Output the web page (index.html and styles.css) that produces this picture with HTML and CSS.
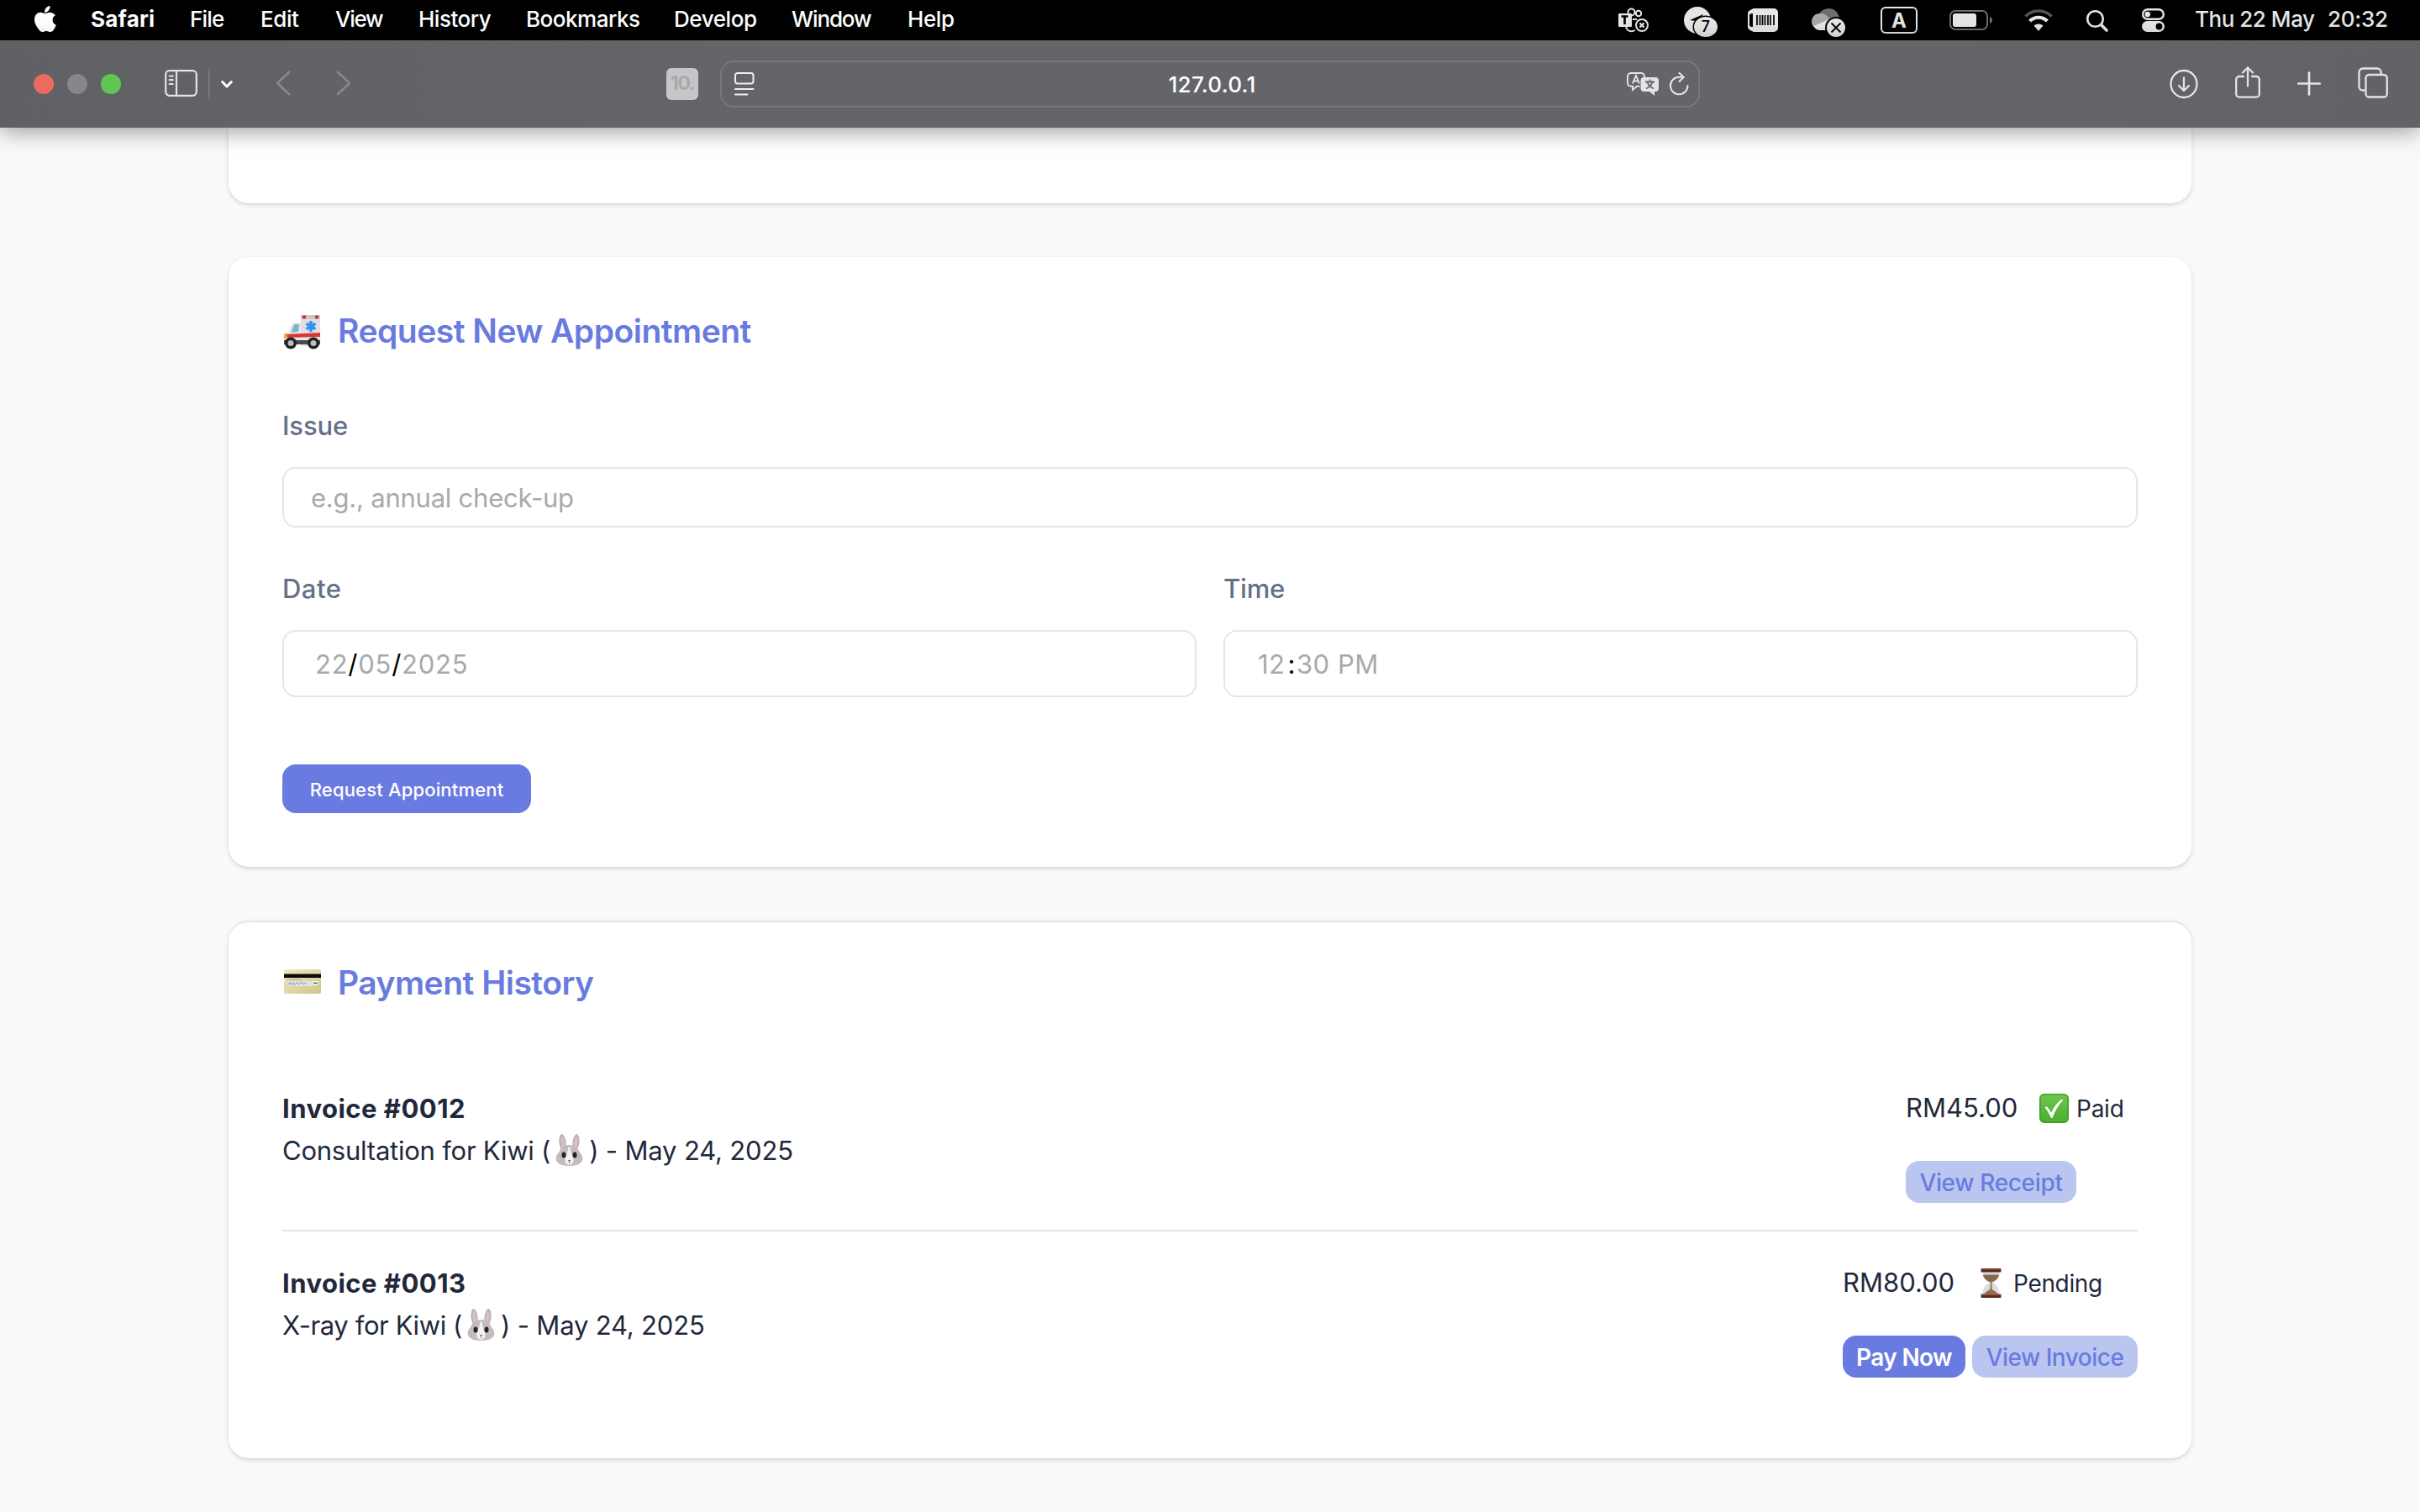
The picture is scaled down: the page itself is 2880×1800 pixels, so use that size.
FILE: index.html
```html
<!DOCTYPE html>
<html lang="en">
<head>
<meta charset="utf-8">
<title>Pet Clinic Dashboard</title>
<link rel="stylesheet" href="styles.css">
</head>
<body>
<header class="menubar">
  <svg class="apple" width="28" height="48" viewBox="0 0 28 48" fill="#fff"><path d="M19.6 7c.3 2.100-.6 4.100-1.800 5.500-1.200 1.500-3 2.500-4.700 2.400-.3-2 .6-4.100 1.700-5.400C16 8.100 18 7.100 19.600 7zM25.800 18.200c-2 1.200-3.200 3.100-3.200 5.600 0 2.900 1.700 5.100 4.200 6-.6 1.800-1.500 3.500-2.600 5.100-1.200 1.800-2.400 3.100-4.300 3.100-1.900 0-2.500-1.100-4.800-1.100s-3 1.100-4.800 1.100-3.100-1.500-4.400-3.300C3.300 31.600 1 27.500 1 23.600c0-5.500 3.500-8.800 7.300-8.800 2.100 0 3.800 1.300 5.200 1.300 1.300 0 3.300-1.400 5.800-1.400 2.500 0 4.900 1.200 6.500 3.500z"/></svg>
  <nav class="menus">
    <span class="m-app">Safari</span><span class="m-file">File</span><span class="m-edit">Edit</span><span class="m-view">View</span><span class="m-history">History</span><span class="m-book">Bookmarks</span><span class="m-dev">Develop</span><span class="m-window">Window</span><span class="m-help">Help</span>
  </nav>
  <div class="status">
    <svg class="s-teams" width="36" height="48" viewBox="0 0 36 48"><g fill="none" stroke="#e6e6e6" stroke-width="2"><circle cx="15.500" cy="14.500" r="4"/><circle cx="24" cy="16" r="3.200"/><path d="M9 31c.5 4 3 6.200 6.500 6.200 1.800 0 3-.4 4.200-1.200M17 23h5"/><circle cx="28" cy="30" r="7"/></g><rect y="16" width="16" height="16" rx="1" fill="#e6e6e6"/><path d="M3.500 19.500h8M7.500 19.500V29" stroke="#000" stroke-width="2.600"/><path d="M25.500 27.500l5 5m0-5l-5 5" stroke="#e6e6e6" stroke-width="2.400"/></svg>
    <svg class="s-send" width="40" height="48" viewBox="0 0 40 48"><circle cx="16" cy="24" r="16" fill="#e6e6e6"/><path d="M7 24l16-7-5 9-3 8-1-9z" fill="#000"/><ellipse cx="26" cy="32" rx="15.500" ry="13.500" fill="#000"/><ellipse cx="26" cy="32" rx="14" ry="12" fill="#e6e6e6"/><text x="26" y="38" text-anchor="middle" class="seven">7</text></svg>
    <svg class="s-bar" width="36" height="48" viewBox="0 0 36 48"><path d="M7 10h24a5 5 0 0 1 5 5v18a5 5 0 0 1-5 5H7l-5-2.500a4 4 0 0 1-2-3.500V16a4 4 0 0 1 2-3.500z" fill="#e6e6e6"/><path d="M2 18q0-2 4-2v16q-4 0-4-2z" fill="#000"/><path d="M11 18v12M14.500 18v12M17.500 18v12M20.500 18v12M24 18v12M27 18v12M31 18v12" stroke="#000" stroke-width="1.700"/></svg>
    <svg class="s-cloud" width="40" height="48" viewBox="0 0 40 48"><path d="M9 16C12 12 16 10 20 10c7 0 11 4 13 11l-10 3z" fill="#6e6e6e"/><path d="M0 26c0-6 4-10 10-10 6 0 9 3 12 7L3 32C1 31 0 28 0 26z" fill="#a8a8a8"/><path d="M2 31l19-8 10 5v8H11c-5 0-7-2-9-5z" fill="#e6e6e6"/><circle cx="29" cy="33" r="13" fill="#000"/><circle cx="29" cy="33" r="11" fill="#e6e6e6"/><path d="M23.500 27.500l11 11m0-11l-11 11" stroke="#000" stroke-width="1.800"/></svg>
    <span class="s-input">A</span>
    <svg class="s-batt" width="51" height="48" viewBox="0 0 51 48"><rect x="1" y="13" width="44" height="22" rx="6" fill="none" stroke="#6c6c6c" stroke-width="2"/><rect x="4" y="16" width="28" height="16" rx="3" fill="#e6e6e6"/><path d="M48 20c4 1 4 7 0 8z" fill="#6c6c6c"/></svg>
    <svg class="s-wifi" width="34" height="48" viewBox="0 0 34 48" fill="none"><path d="M1.500 19.500c8.500-8.700 22.500-8.700 31 0" stroke="#555" stroke-width="3.600"/><path d="M6.500 25c6-5.800 15-5.800 21 0" stroke="#e6e6e6" stroke-width="4"/><path d="M11.500 30.500c3-2.800 8-2.800 11 0L17 37z" fill="#e6e6e6"/></svg>
    <svg class="s-search" width="26" height="48" viewBox="0 0 26 48" fill="none" stroke="#e6e6e6"><circle cx="10.500" cy="22.500" r="9.300" stroke-width="2.600"/><path d="M17.500 29.500l6.500 6.500" stroke-width="3.600" stroke-linecap="round"/></svg>
    <svg class="s-cc" width="27" height="48" viewBox="0 0 27 48"><rect x="1.200" y="11.200" width="24.600" height="11.600" rx="5.800" fill="none" stroke="#e6e6e6" stroke-width="2.400"/><circle cx="6.800" cy="17" r="3.200" fill="#e6e6e6"/><rect y="25" width="27" height="13" rx="6.500" fill="#e6e6e6"/><circle cx="20.500" cy="31.500" r="3.900" fill="#000"/></svg>
    <span class="s-date">Thu 22 May</span><span class="s-time">20:32</span>
  </div>
</header>

<div class="toolbar">
  <div class="tools-left">
    <i class="light red"></i><i class="light gray"></i><i class="light green"></i>
    <svg class="t-side" width="39" height="36" viewBox="0 0 39 36" fill="none" stroke="#e3e3e8" stroke-width="2.200" stroke-linecap="round"><rect x="1.200" y="3.200" width="36.600" height="29.600" rx="4.500"/><path d="M14 3.500v29M5.700 9.500h4M5.700 14.200h4M5.700 19h4"/></svg>
    <i class="t-sep"></i>
    <svg class="t-chev" width="14" height="36" viewBox="0 0 14 36" fill="none" stroke="#fff" stroke-width="3" stroke-linecap="round" stroke-linejoin="round"><path d="M1.700 15.500L7 21l5.300-5.500"/></svg>
    <svg class="t-back" width="18" height="36" viewBox="0 0 18 36" fill="none" stroke="#87888c" stroke-width="2.600" stroke-linecap="round" stroke-linejoin="round"><path d="M16 4L2 17l14 13"/></svg>
    <svg class="t-fwd" width="18" height="36" viewBox="0 0 18 36" fill="none" stroke="#87888c" stroke-width="2.600" stroke-linecap="round" stroke-linejoin="round"><path d="M2 4l14 13L2 30"/></svg>
  </div>
  <span class="favicon">10.</span>
  <div class="urlbar">
    <svg width="24" height="28" viewBox="0 0 24 28" fill="none" stroke="#eeeef0" stroke-width="2" stroke-linecap="round"><rect x="1" y="1" width="21.500" height="12.500" rx="3"/><path d="M1 20h21.500M1 26.500h14.500"/></svg>
    <span class="url">127.0.0.1</span>
    <div class="url-tools">
      <svg width="38" height="28" viewBox="0 0 38 28"><path d="M5 1h12a4 4 0 0 1 4 4v2.500M15.500 16.800H12L7 21v-4.200H5a4 4 0 0 1-4-4V5a4 4 0 0 1 4-4" fill="none" stroke="#e3e3e8" stroke-width="1.900"/><path d="M7 13.500L11 4l4 9.500M8.500 10.500h5" fill="none" stroke="#e3e3e8" stroke-width="1.900"/><path d="M20.500 6H34a4 4 0 0 1 4 4v9a4 4 0 0 1-4 4h-1v5l-6-5h-6.500a4 4 0 0 1-4-4v-9a4 4 0 0 1 4-4z" fill="#e3e3e8"/><path d="M22 11.500h11M27.500 8.500v3M24.500 12c1.500 4 4 6 7.500 7.500M30.500 12c-1.500 4-4 6-7.500 7.500" fill="none" stroke="#636468" stroke-width="1.800"/></svg>
      <svg width="23" height="28" viewBox="0 0 23 28" fill="none" stroke="#e3e3e8" stroke-width="2.100" stroke-linecap="round" stroke-linejoin="round"><path d="M21.500 16a10.300 10.300 0 1 1-10.300-10.300h4.500M11.500 1l5.200 4.800-5.200 5.200"/></svg>
    </div>
  </div>
  <div class="tools-right">
    <svg width="34" height="40" viewBox="0 0 34 40" fill="none" stroke="#e3e3e8" stroke-width="2.300" stroke-linecap="round" stroke-linejoin="round"><ellipse cx="17" cy="21" rx="15.500" ry="16"/><path d="M17 13.500v15M11 23l6 6 6-6"/></svg>
    <svg width="30" height="40" viewBox="0 0 30 40" fill="none" stroke="#e3e3e8" stroke-width="2.300" stroke-linecap="round" stroke-linejoin="round"><path d="M10 12H5a3.800 3.800 0 0 0-3.800 3.800v17A3.800 3.800 0 0 0 5 36.600h20a3.800 3.800 0 0 0 3.800-3.800v-17A3.800 3.800 0 0 0 25 12h-5M15 23.500V1.500M9 7.500l6-6 6 6"/></svg>
    <svg width="28" height="40" viewBox="0 0 28 40" stroke="#e3e3e8" stroke-width="2.700" stroke-linecap="round"><path d="M14 7.500v26M1.300 20.500h25.400"/></svg>
    <svg width="36" height="40" viewBox="0 0 36 40" fill="none" stroke="#e3e3e8" stroke-width="2.300"><path d="M8 28.500H6a4.500 4.500 0 0 1-4.500-4.500V7A4.500 4.500 0 0 1 6 2.500h17A4.500 4.500 0 0 1 27.500 7v2"/><rect x="9.500" y="10" width="25.300" height="26.500" rx="4"/></svg>
  </div>
</div>

<main class="page">
  <section class="card card-cut"></section>

  <section class="card card-form">
    <h2 class="title"><svg class="emoji-title" width="46" height="42" viewBox="0 0 46 42"><rect x="21" y="1" width="23" height="37" rx="1.500" fill="#e2dfe3"/><path d="M21 10h-7c-2 0-3 1-4 3L6 22c-3 1-5 3-5 6v7h43V22H21z" fill="#e9e6ea"/><path d="M19 12h-4c-1.500 0-2.500 1-3 2.500L9.500 22l8.500-1z" fill="#7fb3c9"/><path d="M2 24l42-2v5L1 28z" fill="#d8372e"/><path d="M1 31h43v5H1z" fill="#4b4b4f"/><path d="M1 24l3-2 1 6-4 1z" fill="#f3a73b"/><rect x="21" y="1" width="23" height="5" rx="1" fill="#cfc5c7"/><circle cx="25" cy="3.500" r="2.300" fill="#b8403a"/><circle cx="40" cy="3.500" r="2.300" fill="#b8403a"/><path d="M33 8v13M27.500 11.200l11 6.600M38.500 11.200l-11 6.600" stroke="#338ff0" stroke-width="3.400"/><circle cx="9" cy="34.500" r="7" fill="#202022"/><circle cx="9" cy="34.500" r="3.500" fill="#bdbdc1"/><circle cx="36" cy="34.500" r="7" fill="#202022"/><circle cx="36" cy="34.500" r="3.500" fill="#bdbdc1"/></svg><span class="t-request">Request New Appointment</span></h2>
    <label class="label l-issue" for="issue">Issue</label>
    <input class="field f-text" id="issue" type="text" placeholder="e.g., annual check-up">
    <div class="pair">
      <div class="col">
        <span class="label l-date">Date</span>
        <div class="field f-picker f-date"><span class="part">22</span><span class="sep">/</span><span class="part">05</span><span class="sep">/</span><span class="part">2025</span></div>
      </div>
      <div class="col">
        <span class="label l-time">Time</span>
        <div class="field f-picker f-time"><span class="part">12</span><span class="sep colon">:</span><span class="part">30 PM</span></div>
      </div>
    </div>
    <button class="btn-request">Request Appointment</button>
  </section>

  <section class="card card-pay">
    <h2 class="title"><svg class="emoji-title" width="46" height="42" viewBox="0 0 46 42"><defs><linearGradient id="cg" x2="1" y2="1"><stop stop-color="#efe9bd"/><stop offset="1" stop-color="#cfc48d"/></linearGradient></defs><g transform="translate(0 -3)"><rect x="1" y="7" width="44" height="29" rx="2" fill="url(#cg)"/><path d="M1 12.500h44v4.500H1z" fill="#0b0b0b"/><path d="M4 21h31v6H4z" fill="#dfe3e0"/><path d="M5 25.500l3-3 1 3 3-3 1 3 4-3 2 2.500 3-3 2 2.500 4-1.500" fill="none" stroke="#7f93c9" stroke-width="1"/><rect x="35" y="21" width="7" height="4.500" fill="#f6f6f2"/><path d="M36 23.300h5" stroke="#555" stroke-width="1.300"/><path d="M4 19h18" stroke="#a9a27a" stroke-width=".8"/></g></svg><span class="t-payment">Payment History</span></h2>

    <div class="invoice">
      <div class="desc">
        <strong>Invoice #0012</strong>
        <p><span class="d-consult">Consultation for Kiwi (</span><svg class="rabbit" width="33" height="38" viewBox="0 0 33 38"><ellipse cx="8.500" cy="10" rx="4" ry="10" transform="rotate(-6 8.500 10)" fill="#bdb2b6"/><ellipse cx="24.500" cy="10" rx="4" ry="10" transform="rotate(6 24.500 10)" fill="#bdb2b6"/><ellipse cx="8.800" cy="11" rx="2" ry="8" transform="rotate(-6 8.800 11)" fill="#dcbfc5"/><ellipse cx="24.200" cy="11" rx="2" ry="8" transform="rotate(6 24.200 11)" fill="#dcbfc5"/><path d="M16.500 13C24 13 27 17 29 22c3 3 4.500 7 2.500 10.500C29 37 22 38 16.500 38S4 37 1.500 32.500C-.5 29 1 25 4 22c2-5 5-9 12.500-9z" fill="#c4bbbf"/><path d="M16.500 15c2 0 1.500 8 4 12 3 4 0 10-4 10s-7-6-4-10c2.500-4 2-12 4-12z" fill="#f4f0f1"/><ellipse cx="10" cy="25" rx="2.500" ry="3.600" fill="#26221f"/><ellipse cx="23" cy="25" rx="2.500" ry="3.600" fill="#26221f"/><path d="M14.500 31h4l-2 2.600z" fill="#b05f70"/><path d="M16.500 33.500v2" stroke="#b05f70"/></svg><span class="d-tail">) - May 24, 2025</span></p>
      </div>
      <div class="side side-paid">
        <div class="amount"><span class="rm">RM45.00</span><svg class="emoji-state" width="35" height="35" viewBox="0 0 35 35"><defs><linearGradient id="gg" x2="0" y2="1"><stop stop-color="#6cc84c"/><stop offset="1" stop-color="#4aad2c"/></linearGradient></defs><rect x=".8" y=".8" width="33.400" height="33.400" rx="5" fill="url(#gg)" stroke="#3f9a2b" stroke-width="1.500"/><path d="M6.500 16.500l2.500-1.200c2 2.300 3.600 4.700 5 7.500C17 16 21 11 26 7l2.500.3C23 13.500 18.500 20.500 15.500 29H14c-2-5-4.500-9-7.500-12.500z" fill="#fff"/></svg><span class="state st-paid">Paid</span></div>
        <div class="actions"><button class="btn soft b-receipt">View Receipt</button></div>
      </div>
    </div>

    <div class="invoice last">
      <div class="desc">
        <strong>Invoice #0013</strong>
        <p><span class="d-xray">X-ray for Kiwi (</span><svg class="rabbit" width="33" height="38" viewBox="0 0 33 38"><ellipse cx="8.500" cy="10" rx="4" ry="10" transform="rotate(-6 8.500 10)" fill="#bdb2b6"/><ellipse cx="24.500" cy="10" rx="4" ry="10" transform="rotate(6 24.500 10)" fill="#bdb2b6"/><ellipse cx="8.800" cy="11" rx="2" ry="8" transform="rotate(-6 8.800 11)" fill="#dcbfc5"/><ellipse cx="24.200" cy="11" rx="2" ry="8" transform="rotate(6 24.200 11)" fill="#dcbfc5"/><path d="M16.500 13C24 13 27 17 29 22c3 3 4.500 7 2.500 10.500C29 37 22 38 16.500 38S4 37 1.500 32.500C-.5 29 1 25 4 22c2-5 5-9 12.500-9z" fill="#c4bbbf"/><path d="M16.500 15c2 0 1.500 8 4 12 3 4 0 10-4 10s-7-6-4-10c2.500-4 2-12 4-12z" fill="#f4f0f1"/><ellipse cx="10" cy="25" rx="2.500" ry="3.600" fill="#26221f"/><ellipse cx="23" cy="25" rx="2.500" ry="3.600" fill="#26221f"/><path d="M14.500 31h4l-2 2.600z" fill="#b05f70"/><path d="M16.500 33.500v2" stroke="#b05f70"/></svg><span class="d-tail">) - May 24, 2025</span></p>
      </div>
      <div class="side side-pending">
        <div class="amount"><span class="rm">RM80.00</span><svg class="emoji-state" width="35" height="35" viewBox="0 0 35 35"><path d="M7.500 4h20c0 8-3 10-8 13 5 3 8 6 8 14h-20c0-8 3-11 8-14-5-3-8-5-8-13z" fill="#dcdce4"/><path d="M8 7.500h19c-.6 4.500-4 7-8.500 9h-2C12 14.500 8.600 12 8 7.500z" fill="#86694c"/><path d="M17 16h1.200l.5 9c3 1.500 5 3 7 5.500H9.300c2-2.500 4-4 7-5.500z" fill="#94703f"/><rect x="5.500" y="0" width="24" height="4.500" rx="1" fill="#5a2c1a"/><rect x="5.500" y="30.500" width="24" height="4.500" rx="1" fill="#5a2c1a"/><path d="M6 1h23M6 31.500h23" stroke="#94583c" stroke-width="1"/></svg><span class="state st-pending">Pending</span></div>
        <div class="actions"><button class="btn solid b-pay">Pay Now</button><button class="btn soft b-invoice">View Invoice</button></div>
      </div>
    </div>
  </section>
</main>
</body>
</html>
```

FILE: styles.css
```css
* { box-sizing: border-box; }
body {
  margin: 0;
  width: 2880px;
  height: 1800px;
  overflow: hidden;
  background: #f8fafc;
  color: #1f293b;
  font-family: Inter, "Liberation Sans", sans-serif;
  font-size: 31px;
}
svg { display: block; flex: none; }
button, input { font-family: inherit; }
h2, p { margin: 0; }

/* Menu bar */
.menubar {
  display: flex;
  height: 48px;
  background: #000;
  color: #fff;
  font-size: 26px;
  font-weight: 500;
  line-height: 45px;
  white-space: nowrap;
}
.apple { margin-left: 40px; }
.menus {
  display: grid;
  grid-template-columns: 118px 84px 89px 99px 128px 176px 140px 138px 60px;
  margin-left: 40px;
}
.m-app { font-weight: 700; letter-spacing: .23px; }
.m-file { letter-spacing: -.8px; }
.m-edit { letter-spacing: -.43px; }
.m-view { letter-spacing: -1.280px; }
.m-history { letter-spacing: -.5px; }
.m-book { letter-spacing: -.48px; }
.m-dev { letter-spacing: -.42px; }
.m-window { letter-spacing: -1.120px; }
.m-help { letter-spacing: -.39px; }
.status {
  display: flex;
  margin-left: auto;
  padding-right: 37px;
  color: #e6e6e6;
}
.s-send { margin-left: 42px; }
.s-bar { margin-left: 36px; }
.s-cloud { margin-left: 40px; }
.s-input {
  width: 44px;
  height: 32px;
  margin: 8px 0 0 42px;
  border: 2px solid #e6e6e6;
  border-radius: 6px;
  font-size: 24px;
  font-weight: 700;
  line-height: 29px;
  text-align: center;
}
.s-batt { margin-left: 38px; }
.s-wifi { margin-left: 38px; }
.s-search { margin-left: 40px; }
.s-cc { margin-left: 40px; }
.s-date { width: 158px; margin-left: 36px; letter-spacing: -.47px; }
.s-time { width: 73px; letter-spacing: -.25px; }
.seven { font-size: 18px; font-weight: 500; }

/* Browser toolbar */
.toolbar {
  position: relative;
  z-index: 1;
  display: flex;
  align-items: center;
  height: 104px;
  background: linear-gradient(90deg, #606165, #646569 30%, #646569 80%, #626367);
  box-shadow: 0 4px 26px rgba(0, 0, 0, .4);
}
.tools-left { display: flex; align-items: center; width: 793px; padding-left: 40px; }
.light { width: 24px; height: 24px; margin-right: 16px; border-radius: 50%; }
.red { background: #ed6a5e; }
.gray { background: #86878b; }
.green { background: #61c554; }
.t-side { margin: 0 0 2px 36px; }
.t-sep { width: 2px; height: 36px; margin-left: 13px; background: #76777b; }
.t-chev { margin-left: 13px; }
.t-back { margin-left: 51px; }
.t-fwd { margin-left: 54px; }
.favicon {
  width: 38px;
  height: 38px;
  border-radius: 6px;
  background: #c6c6c9;
  color: #a9a9ac;
  font-size: 23px;
  font-weight: 700;
  line-height: 37px;
  text-align: center;
  letter-spacing: -1.500px;
}
.urlbar {
  display: grid;
  grid-template-columns: 1fr auto 1fr;
  align-items: center;
  width: 1166px;
  height: 56px;
  margin-left: 26px;
  padding: 0 11px 0 15px;
  border: 2px solid #77787c;
  border-radius: 16px;
  color: #fff;
  font-size: 26px;
  font-weight: 500;
}
.url { padding-left: 1px; letter-spacing: .3px; }
.url-tools { display: flex; justify-content: flex-end; gap: 13px; }
.tools-right {
  display: flex;
  align-items: center;
  gap: 44px;
  margin-left: auto;
  padding: 0 38px 3px 0;
}

/* Dashboard cards */
.page {
  display: flex;
  flex-direction: column;
  gap: 64px;
  width: 2336px;
  margin: 0 auto;
}
.card {
  padding: 64px;
  border-radius: 24px;
  background: #fff;
  box-shadow: 0 2px 6px rgba(0, 0, 0, .12), 0 2px 4px -2px rgba(0, 0, 0, .12);
}
.card-cut { height: 90px; padding: 0; border-radius: 0 0 24px 24px; }
.card-form { display: flex; flex-direction: column; height: 726px; }
.card-pay { height: 640px; padding-top: 48px; border-top: 2px solid #e2e6ed; }
.title {
  display: flex;
  height: 48px;
  color: #697be0;
  font-size: 39px;
  font-weight: 600;
  line-height: 48px;
}
.emoji-title { margin: 4px 19px 0 1px; }
.t-request { letter-spacing: -.5px; }
.t-payment { letter-spacing: -.5px; }
.label {
  display: block;
  height: 40px;
  color: #647087;
  font-weight: 500;
  line-height: 40px;
}
.l-issue { margin-top: 69px; letter-spacing: -.12px; }
.l-date { letter-spacing: .5px; }
.l-time { letter-spacing: -.19px; }
.field {
  width: 100%;
  margin-top: 29px;
  border: 2px solid #e2e6ed;
  border-radius: 16px;
  background: #fff;
  font-size: 31px;
}
.f-text { height: 72px; padding: 1px 32px 0; letter-spacing: -.23px; }
.f-text::placeholder { color: #a9a9a9; opacity: 1; }
.pair { display: grid; grid-template-columns: 1fr 1fr; gap: 32px; margin-top: 53px; }
.f-picker { height: 80px; color: #a9a9a9; line-height: 78px; }
.f-date { padding-left: 37px; letter-spacing: .75px; }
.f-time { padding-left: 39px; letter-spacing: .5px; }
.sep { color: #000; }
.colon { margin: 0 1px 0 3px; }
.btn-request {
  width: 296px;
  height: 58px;
  margin-top: 80px;
  padding: 2px 0 0;
  border: 0;
  border-radius: 16px;
  background: #697be0;
  color: #fff;
  font-size: 22px;
  font-weight: 500;
  letter-spacing: .17px;
}

/* Invoice rows */
.invoice {
  display: flex;
  justify-content: space-between;
  height: 208px;
  padding-top: 36px;
  border-bottom: 2px solid #e2e6ed;
  line-height: 50px;
  white-space: nowrap;
}
.title + .invoice { margin-top: 64px; }
.last { border-bottom: 0; }
.desc { padding-top: 1px; }
.desc strong { display: block; font-weight: 700; letter-spacing: .48px; }
.desc p { display: flex; }
.rabbit { margin: 5px 7px 0 6px; }
.d-consult { letter-spacing: -.23px; }
.d-xray { letter-spacing: -.4px; }
.d-tail { letter-spacing: -.17px; }
.side-paid { width: 276px; }
.side-pending { width: 351px; }
.amount { display: flex; height: 50px; }
.rm { width: 132px; }
.emoji-state { margin: 8px 9px 0 27px; }
.state { font-size: 28px; line-height: 53px; }
.st-paid { letter-spacing: -.25px; }
.st-pending { letter-spacing: -.34px; }
.actions { display: flex; gap: 8px; margin-top: 38px; }
.btn {
  height: 50px;
  padding: 2px 0 0;
  border: 0;
  border-radius: 16px;
  font-size: 28px;
  font-weight: 500;
}
.soft { background: #bbc6f0; color: #697be0; }
.solid { background: #697be0; color: #fff; }
.b-receipt { width: 203px; letter-spacing: -.34px; }
.b-pay { width: 146px; font-weight: 600; letter-spacing: -.64px; }
.b-invoice { width: 197px; letter-spacing: -.5px; }
```
